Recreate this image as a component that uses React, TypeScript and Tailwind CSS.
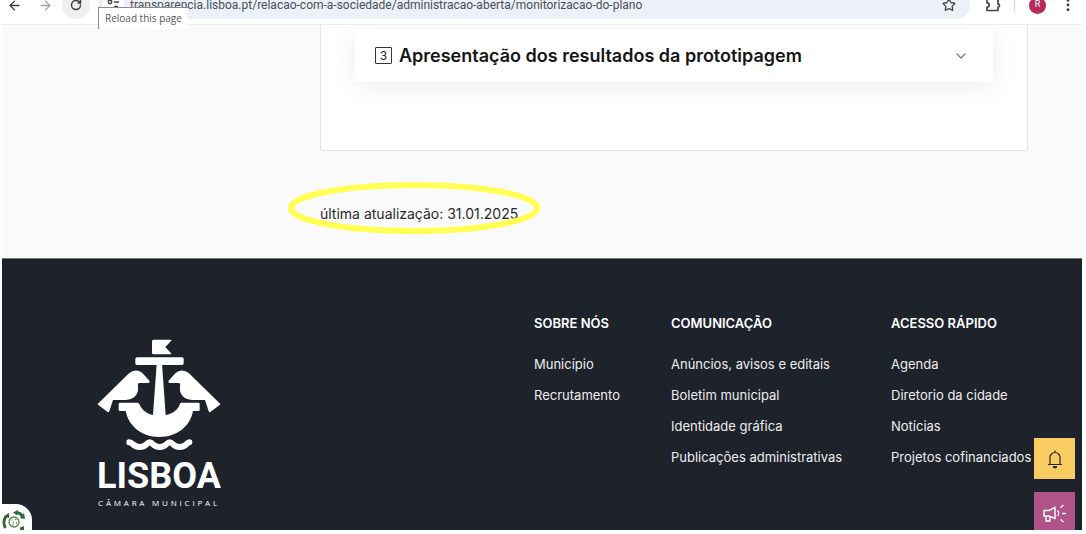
import {
  ArrowLeft,
  ArrowRight,
  ChevronDown,
  EllipsisVertical,
  RotateCw,
  Star,
} from "lucide-react";

const columns = [
  {
    title: "SOBRE NÓS",
    links: ["Município", "Recrutamento"],
  },
  {
    title: "COMUNICAÇÃO",
    links: [
      "Anúncios, avisos e editais",
      "Boletim municipal",
      "Identidade gráfica",
      "Publicações administrativas",
    ],
  },
  {
    title: "ACESSO RÁPIDO",
    links: [
      "Agenda",
      "Diretorio da cidade",
      "Notícias",
      "Projetos cofinanciados",
    ],
  },
];

function BrowserBar() {
  return (
    <div className="relative z-10 shrink-0">
      <div className="flex h-[25px] items-end overflow-hidden border-b border-[#ececec] bg-white pb-[5px]">
        <div className="flex h-7 w-full items-center pl-[5px]">
          <button aria-label="Back" className="text-[#3c3c3c]">
            <ArrowLeft className="h-[15px] w-[15px]" strokeWidth={2.2} />
          </button>
          <button aria-label="Forward" className="ml-4 text-[#a3a3a3]">
            <ArrowRight className="h-[15px] w-[15px]" strokeWidth={2.2} />
          </button>
          <button
            aria-label="Reload"
            className="ml-[9px] flex h-7 w-7 items-center justify-center rounded-full bg-[#efefef] text-[#3c3c3c]"
          >
            <RotateCw className="h-3 w-3" strokeWidth={2.8} />
          </button>
          <div className="ml-2 flex h-7 flex-1 items-center rounded-full bg-[#ecf1f9] pr-[14px]">
            <button
              aria-label="Site information"
              className="ml-1 flex h-[22px] w-[22px] items-center justify-center rounded-full bg-white"
            >
              <svg
                viewBox="0 0 12 12"
                className="h-3 w-3"
                fill="none"
                stroke="#444"
                strokeWidth="1.5"
              >
                <circle cx="3" cy="3" r="1.7" />
                <path d="M7 3h5M0 9h5" />
                <circle cx="9" cy="9" r="1.7" />
              </svg>
            </button>
            <input
              aria-label="Address"
              readOnly
              value="transparencia.lisboa.pt/relacao-com-a-sociedade/administracao-aberta/monitorizacao-do-plano"
              className="ml-[6px] min-w-0 flex-1 bg-transparent font-['Roboto',sans-serif] text-[12px] leading-4 text-[#4b4e54] outline-none"
            />
            <button aria-label="Bookmark" className="text-[#444]">
              <Star className="h-[14px] w-[14px]" strokeWidth={2.2} />
            </button>
          </div>
          <button aria-label="Extensions" className="ml-[15px]">
            <svg
              viewBox="0 0 16 16"
              className="h-4 w-4"
              fill="none"
              stroke="#444"
              strokeWidth="1.7"
              strokeLinejoin="round"
            >
              <path d="M2 2h11v5a1.500 1.500 0 0 1 0 3V13.500H2v-3.300a2.200 2.200 0 0 0 0-4.400z" />
            </svg>
          </button>
          <div className="ml-[13px] h-3 w-px bg-[#c5d7f5]" />
          <button
            aria-label="Profile"
            className="ml-[14px] flex h-[17px] w-[17px] items-center justify-center rounded-full bg-[#b62b5c] font-['Roboto',sans-serif] text-[9px] text-white"
          >
            R
          </button>
          <button aria-label="Menu" className="mr-[6px] ml-[14px] text-[#3c3c3c]">
            <EllipsisVertical className="h-4 w-4" strokeWidth={2.4} />
          </button>
        </div>
      </div>
      <div
        role="tooltip"
        className="absolute top-[7px] left-24 border-t border-l border-[#8b8b8b] bg-white px-[6px] font-['Open_Sans',sans-serif] text-[10px] leading-[21px] whitespace-nowrap text-[#575757]"
      >
        Reload this page
      </div>
    </div>
  );
}

function LisboaLogo() {
  return (
    <a
      href="#"
      aria-label="Lisboa Câmara Municipal"
      className="flex w-[124px] flex-col items-center text-white"
    >
      <svg viewBox="54 42 370 336" className="h-[112px] w-[124px]" fill="currentColor">
        <path d="M222 44h53q3 2 0 4l-17 18 17 19q3 3-1 3h-51q-5 0-5-5V49q0-5 4-5z" />
        <rect x="168" y="97" width="145" height="23" rx="5" />
        <path d="M232 116h16l11 154c22-4 38-17 43-34q1-3 5-3h50q4 0 4 4v17q0 4-4 4h-16c-8 45-48 78-101 78s-92-33-101-78h-17q-4 0-4-4v-17q0-4 4-4h52q4 0 6 4c8 18 21 29 41 33z" />
        <path d="M55 237 149 145q20-16 40-1l20 22q4 7-2 8h-29q-4 4-2 10c3 22-10 40-37 41h-38l-11 34q-2 5-6 1l-28-21q-2-1 0-2z" />
        <path d="M423 237 329 145q-20-16-40-1l-20 22q-4 7 2 8h29q4 4 2 10c-3 22 10 40 37 41h38l11 34q2 5 6 1l28-21q2-1 0-2z" />
        <path
          d="M150 352c10-1 9 14 31 14s20-14 30-14 9 14 30 14 20-14 30-14 9 14 30 14 20-14 29-14"
          fill="none"
          stroke="currentColor"
          strokeWidth="18"
          strokeLinecap="round"
        />
      </svg>
      <span className="mt-1 font-['Roboto',sans-serif] text-[36px] leading-[42px] font-bold">
        LISBOA
      </span>
      <span className="font-['Open_Sans',sans-serif] text-[8px] leading-3 tracking-[0.35em] whitespace-nowrap">
        CÂMARA MUNICIPAL
      </span>
    </a>
  );
}

function Footer() {
  return (
    <footer className="flex flex-1 items-start justify-between border-t border-[#777] bg-[#1e222b] pr-[54px] pl-[95px] text-white">
      <div className="pt-20">
        <LisboaLogo />
      </div>
      <div className="grid grid-cols-[137px_220px_137px] pt-[54px]">
        {columns.map((column) => (
          <nav key={column.title} aria-label={column.title}>
            <h3 className="text-[13px] leading-5 font-semibold whitespace-nowrap">
              {column.title}
            </h3>
            <ul className="mt-4 text-[13px] text-[#eeeeee]">
              {column.links.map((link) => (
                <li key={link} className="leading-[31px] whitespace-nowrap">
                  <a href="#">{link}</a>
                </li>
              ))}
            </ul>
          </nav>
        ))}
      </div>
    </footer>
  );
}

function FloatingButtons() {
  return (
    <>
      <div className="absolute right-[7px] -bottom-[3px] flex flex-col gap-[13px]">
        <button
          aria-label="Alertas"
          className="flex h-[41px] w-[41px] items-center justify-center bg-[#f7cd61] text-[#292929]"
        >
          <svg viewBox="0 0 16 20" className="h-5 w-4" fill="none" stroke="currentColor" strokeWidth="1.2">
            <path d="M1 15.500h14M3 15V8.500a5 5 0 0 1 10 0V15M8 3.500V1.500" />
            <path d="M6.500 17.500a1.500 1.500 0 0 0 3 0z" fill="currentColor" />
          </svg>
        </button>
        <button
          aria-label="Participar"
          className="flex h-[41px] w-[41px] items-center justify-center bg-[#b05388] text-white"
        >
          <svg viewBox="0 0 26 20" className="h-5 w-[26px]" fill="none" stroke="currentColor" strokeWidth="1.4">
            <path d="M2 7.500h5l6-3v11l-6-2.500H2zM4 13v5h4v-4.500M15.500 7.500c1.500 1.500 1.500 4 0 5.500M20 10.500h4M18.500 4.500l3-2.500M18.500 16.500l3 2.500" />
          </svg>
        </button>
      </div>
      <button
        aria-label="Cookies"
        className="absolute bottom-0 left-0 h-[26px] w-[30px] overflow-hidden rounded-tr-2xl bg-white"
      >
        <svg viewBox="0 0 30 26" className="h-[26px] w-[30px]" fill="none">
          <circle cx="12" cy="18" r="5" stroke="#52864c" strokeWidth="1.300" />
          <path d="M9.500 16h1M13 15.500h1.500M11 18.500h1M14 19h1M10.500 21h1" stroke="#52864c" strokeWidth="1.300" />
          <path d="M3.500 24c-2.500-4-2-9 1-12M14 8.500c4 0 6 2.500 7 5.500M21 24c-1 1-2 2-3 2" stroke="#2e6832" strokeWidth="2.800" />
          <path d="m2 12 5-3v5zM11 8.500l5-2.500-1 5.500zM18 14l5 1-1-6zM17 24l5-2v4z" fill="#2e6832" />
        </svg>
      </button>
    </>
  );
}

export default function App() {
  return (
    <div className="h-screen bg-white pr-1 pb-1 pl-[2px] font-['Inter','Liberation_Sans',sans-serif]">
      <div className="relative flex h-full flex-col overflow-hidden bg-[#fafafa]">
        <BrowserBar />
        <main className="pr-[54px] pb-8 pl-[318px]">
          <section className="rounded-b-[3px] border border-t-0 border-[#e5e5e5] bg-white px-[34px] pt-1 pb-[68px]">
            <button className="flex h-[53px] w-full items-center bg-white px-5 text-left shadow-[0_4px_28px_rgba(0,0,0,0.08)]">
              <span className="flex h-[17px] w-[17px] items-center justify-center rounded-[1px] border border-[#333] text-[12px] leading-3 text-[#222]">
                3
              </span>
              <span className="ml-[7px] flex-1 text-[18px] leading-6 font-semibold text-[#151515]">
                Apresentação dos resultados da prototipagem
              </span>
              <ChevronDown className="mr-1 h-4 w-4 text-[#777]" strokeWidth={1.8} />
            </button>
          </section>
          <div className="relative mt-[51px] w-fit">
            <p className="text-[14px] leading-6 text-[#2b2b2b]">
              última atualização: 31.01.2025
            </p>
            <svg
              viewBox="0 0 252 52"
              className="pointer-events-none absolute -top-5 -left-8 h-[52px] w-[252px] max-w-none"
              fill="none"
            >
              <ellipse cx="126" cy="26" rx="123" ry="23" stroke="#ffff54" strokeWidth="6" />
            </svg>
          </div>
        </main>
        <Footer />
        <FloatingButtons />
      </div>
    </div>
  );
}
